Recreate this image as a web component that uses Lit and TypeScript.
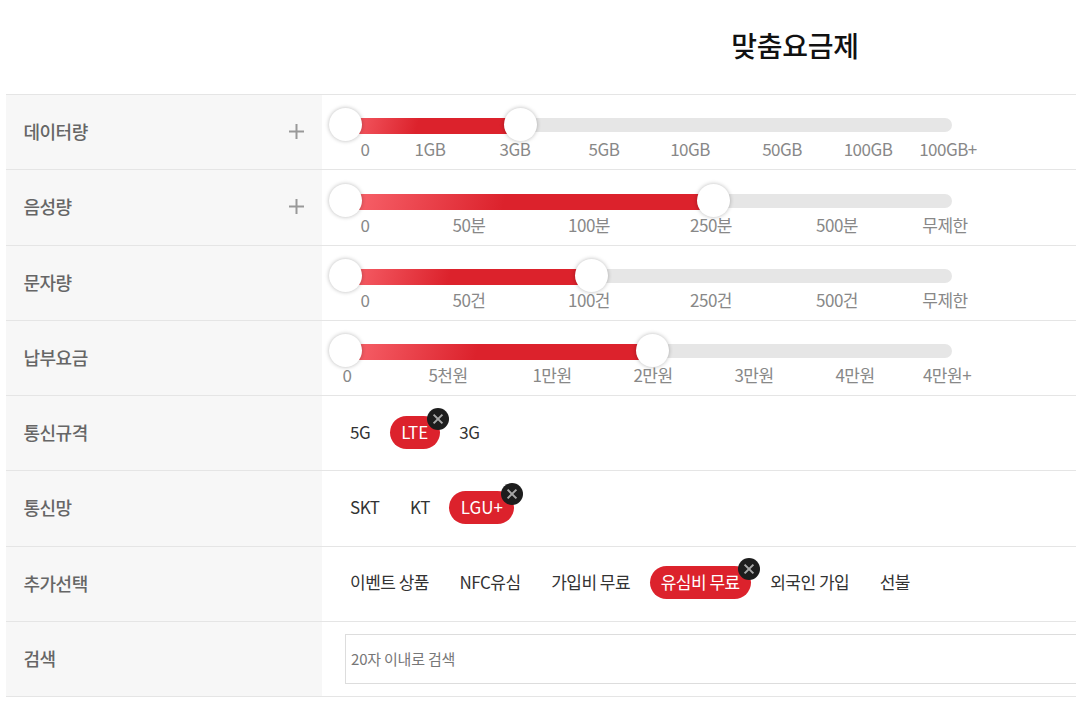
import { LitElement, html, css } from "lit";
import { customElement } from "lit/decorators.js";

interface Tick { t: string; c: number }
interface SliderRow { label: string; plus: boolean; fill: number; ticks: Tick[] }
interface ChipRow { label: string; chips: { t: string; on?: boolean }[] }

const mk = (labels: string[], centers: number[]): Tick[] => labels.map((t, i) => ({ t, c: centers[i] }));

const sliders: SliderRow[] = [
  { label: "데이터량", plus: true, fill: 520, ticks: mk(["0", "1GB", "3GB", "5GB", "10GB", "50GB", "100GB", "100GB+"], [365, 430, 515, 604, 690, 782, 868, 948]) },
  { label: "음성량", plus: true, fill: 713, ticks: mk(["0", "50분", "100분", "250분", "500분", "무제한"], [365, 469, 589, 711, 837, 945]) },
  { label: "문자량", plus: false, fill: 591, ticks: mk(["0", "50건", "100건", "250건", "500건", "무제한"], [365, 469, 589, 711, 837, 945]) },
  { label: "납부요금", plus: false, fill: 652, ticks: mk(["0", "5천원", "1만원", "2만원", "3만원", "4만원", "4만원+"], [347, 448, 552, 653, 754, 855, 947]) },
];
const chips: ChipRow[] = [
  { label: "통신규격", chips: [{ t: "5G" }, { t: "LTE", on: true }, { t: "3G" }] },
  { label: "통신망", chips: [{ t: "SKT" }, { t: "KT" }, { t: "LGU+", on: true }] },
  { label: "추가선택", chips: [{ t: "이벤트 상품" }, { t: "NFC유심" }, { t: "가입비 무료" }, { t: "유심비 무료", on: true }, { t: "외국인 가입" }, { t: "선불" }] },
];

const ORIGIN = 322;
const FILL_LEFT = 12;

@customElement("app-root")
export class AppRoot extends LitElement {
  static styles = css`
    :host { display: block; width: 1076px; height: 713px; overflow: hidden; background: #fff;
      font-family: "Noto Sans CJK KR", "Noto Sans", sans-serif; }
    .title { height: 94px; box-sizing: border-box; margin: 0; padding: 25px 0 0 514px; width: 1076px;
      text-align: center; font-size: 28px; line-height: 40px; font-weight: 500; color: #111; letter-spacing: -0.3px; }
    .table { margin-left: 6px; border-bottom: 1px solid #e5e5e5; }
    .row { display: flex; height: 75.25px; box-sizing: border-box; border-top: 1px solid #e5e5e5; }
    .head { flex: 0 0 316px; background: #f7f7f7; display: flex; align-items: center; justify-content: space-between;
      padding: 0 18px 2px 17.5px; box-sizing: border-box; font-size: 18px; letter-spacing: -0.5px; font-weight: 500; color: #666; }
    .plus { width: 15px; height: 15px; display: block; }
    .cell { flex: 1; min-width: 0; position: relative; }
    .slider { position: relative; height: 17px; margin-top: 23.4px; }
    .track { position: absolute; left: 30px; top: 0; width: 600px; height: 14px; border-radius: 7px; background: #e6e6e6; }
    .fill { position: absolute; left: 12px; top: 0; height: 16px; border-radius: 0 8px 8px 0;
      background: linear-gradient(105deg, #fb6a72 0, #dc222c 45%); }
    .thumb { position: absolute; top: -10px; width: 33px; height: 33px; margin-left: -16.5px; border-radius: 50%;
      background: #fff; box-shadow: 0 0 4px rgba(0,0,0,.28); }
    .ticks { display: flex; margin-top: 4px; font-size: 17px; line-height: 20px; color: #888; letter-spacing: -0.5px; }
    .tick { flex: 0 0 0; width: 0; display: flex; justify-content: center; white-space: nowrap; }
    .chips { display: flex; align-items: center; height: 100%; padding-left: 17px; font-size: 17px; color: #333; letter-spacing: -0.5px; padding-bottom: 2px; box-sizing: border-box; }
    .chip { position: relative; padding: 0 11px; height: 33px; line-height: 32px; border-radius: 17px; white-space: nowrap; margin-right: 8.5px; }
    .chip.on { background: #dc222c; color: #fff; }
    .chip.latin { letter-spacing: 0; padding: 0 11.5px; }
    .x { position: absolute; right: -9px; top: -8px; width: 22px; height: 22px; display: block; }
    .search { display: flex; align-items: center; height: 100%; padding: 0 0 0 23px; box-sizing: border-box; }
    .box { flex: 1; height: 50px; box-sizing: border-box; border: 1px solid #ddd; border-right: 0; padding-left: 5px;
      line-height: 47px; font-size: 15px; color: #777; letter-spacing: -0.2px; }
  `;

  private slider(s: SliderRow) {
    return html`<div class="row">
      <div class="head"><span>${s.label}</span>${s.plus
        ? html`<svg class="plus" viewBox="0 0 15 15"><path d="M7.5 0v15M0 7.5h15" stroke="#999" stroke-width="2" fill="none"/></svg>`
        : null}</div>
      <div class="cell">
        <div class="slider">
          <div class="track"></div>
          <div class="fill" style="width:${s.fill - ORIGIN - FILL_LEFT}px"></div>
          <div class="thumb" style="left:23.5px"></div>
          <div class="thumb" style="left:${s.fill - ORIGIN}px"></div>
        </div>
        <div class="ticks">${s.ticks.map((k, i) => html`<span class="tick"
          style="margin-left:${i === 0 ? k.c - ORIGIN : k.c - s.ticks[i - 1].c}px">${k.t}</span>`)}</div>
      </div>
    </div>`;
  }

  private chipRow(r: ChipRow) {
    return html`<div class="row">
      <div class="head"><span>${r.label}</span></div>
      <div class="cell"><div class="chips">${r.chips.map((c) => html`<span class="chip ${c.on ? "on" : ""} ${c.on && /^[A-Z+]+$/.test(c.t) ? "latin" : ""}">${c.t}${c.on
        ? html`<svg class="x" viewBox="0 0 22 22"><circle cx="11" cy="11" r="11" fill="#1d1d1d"/><path d="M6.6 6.6l8.8 8.8M15.4 6.6l-8.8 8.8" stroke="#a8a8a8" stroke-width="2" fill="none"/></svg>`
        : null}</span>`)}</div></div>
    </div>`;
  }

  render() {
    return html`
      <h1 class="title">맞춤요금제</h1>
      <div class="table">
        ${sliders.map((s) => this.slider(s))}
        ${chips.map((r) => this.chipRow(r))}
        <div class="row">
          <div class="head"><span>검색</span></div>
          <div class="cell"><div class="search"><div class="box">20자 이내로 검색</div></div></div>
        </div>
      </div>`;
  }
}
